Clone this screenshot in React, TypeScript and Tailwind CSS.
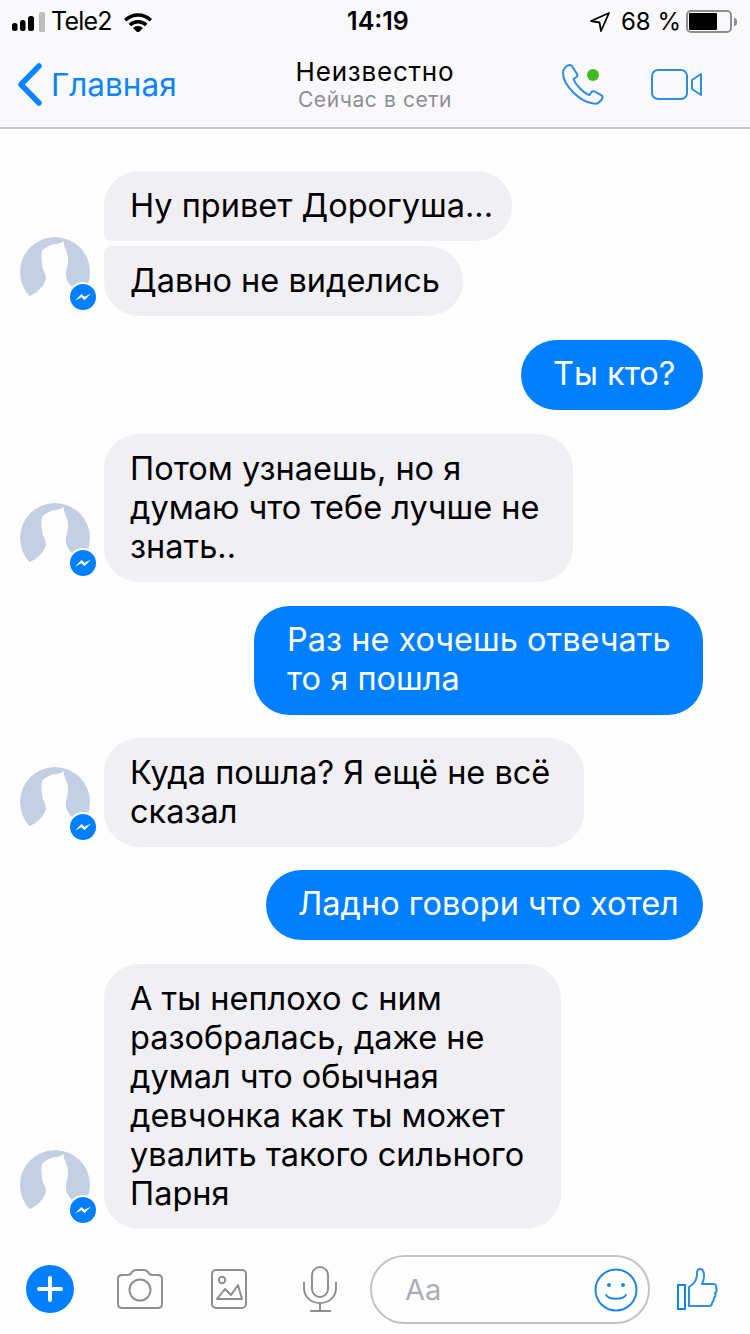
import React from 'react';

type Msg = {
  text: string[];
  mine?: boolean;
  cls: string;
};

const font = { fontFamily: 'Inter, "Noto Sans", sans-serif' };

const groups: Msg[][] = [
  [
    { text: ['Ну привет Дорогуша...'], cls: 'w-[408px] h-[70px] rounded-t-[35px] rounded-br-[35px] rounded-bl-[8px]' },
    { text: ['Давно не виделись'], cls: 'w-[359px] h-[70px] rounded-b-[35px] rounded-tr-[35px] rounded-tl-[8px]' }
  ],
  [{ text: ['Ты кто?'], mine: true, cls: 'w-[182px] h-[70px] pl-[32px]' }],
  [{ text: ['Потом узнаешь, но я', 'думаю что тебе лучше не', 'знать..'], cls: 'w-[469px] h-[148px]' }],
  [{ text: ['Раз не хочешь отвечать', 'то я пошла'], mine: true, cls: 'w-[449px] h-[109px] mb-[-1px] pl-[33px]' }],
  [{ text: ['Куда пошла? Я ещё не всё', 'сказал'], cls: 'w-[480px] h-[109px] mb-[-1px]' }],
  [{ text: ['Ладно говори что хотел'], mine: true, cls: 'w-[437px] h-[70px] pl-[32px]' }],
  [
    {
      text: ['А ты неплохо с ним', 'разобралась, даже не', 'думал что обычная', 'девчонка как ты может', 'увалить такого сильного', 'Парня'],
      cls: 'w-[457px] h-[265px]'
    }
  ]
];

const Avatar = () => (
  <div className="relative mb-[9px] h-[70px] w-[70px] shrink-0">
    <svg viewBox="0 0 70 70" className="h-[70px] w-[70px]">
      <circle cx="35" cy="35" r="35" fill="#c5cfe4" />
      <path
        fill="#fefefe"
        d="M23 13C27 9 33 7 36 7c3 0 6-2 8-3-1 3 1 6 2 9 2 5 3 11 1 17-1 4-2 8 0 13 2 4 4 6 7 9l16 27H-5l15-20c8-4 14-10 16-17 0-6-4-9-4-15-1-6-1-11 1-15z"
      />
    </svg>
    <div className="absolute bottom-[-5px] right-[-8px] flex h-[30px] w-[30px] items-center justify-center rounded-full bg-[#fefefe]">
      <div className="flex h-[26px] w-[26px] items-center justify-center rounded-full bg-[#0080ff]">
        <svg viewBox="0 0 26 26" className="h-[26px] w-[26px]">
          <path fill="#ffffff" d="M5 16.500l6.500-6.500 3 2.800 6.500-3.300-6.500 6.700-3-2.900z" />
        </svg>
      </div>
    </div>
  </div>
);

const Bubble = ({ msg }: { msg: Msg }) => (
  <div
    className={`text-[32.5px] leading-[39px] whitespace-nowrap ${
      msg.mine ? 'rounded-[35px] bg-[#0080ff] pt-[14px] text-white' : 'rounded-[35px] bg-[#f0eff4] pl-[26px] pt-[15px] text-black'
    } ${msg.cls}`}
  >
    {msg.text.map((line) => (
      <div key={line}>{line}</div>
    ))}
  </div>
);

const StatusBar = () => (
  <div className="flex h-[43px] items-center justify-between pl-[12px] pr-[13px] text-[25px] text-black">
    <div className="flex w-[263px] items-center">
      <svg viewBox="0 0 33 20" className="h-[20px] w-[33px]">
        <rect x="0" y="11" width="5.500" height="8" rx="2.500" fill="#000" />
        <rect x="8" y="8" width="5.500" height="11" rx="2.500" fill="#000" />
        <rect x="16" y="4" width="6" height="15" rx="2.500" fill="#000" />
        <rect x="27" y="0" width="6" height="20" rx="1.500" fill="#bdbdbd" />
      </svg>
      <span className="ml-[6px] tracking-[-0.8px]">Tele2</span>
      <svg viewBox="0 0 28 20" className="ml-[12px] h-[20px] w-[28px]">
        <path d="M0 7a20 20 0 0 1 28 0l-2.400 2.600a16.600 16.600 0 0 0-23.200 0z" fill="#000" />
        <path d="M4.600 11.700a13.600 13.600 0 0 1 18.800 0L21 14.200a10.200 10.200 0 0 0-14 0z" fill="#000" />
        <path d="M9 16a7.200 7.200 0 0 1 10 0l-5 5z" fill="#000" />
      </svg>
    </div>
    <span className="font-semibold">14:19</span>
    <div className="flex w-[256px] items-center justify-end">
      <svg viewBox="0 0 20 20" className="h-[20px] w-[20px]">
        <path d="M19 1L1 9l8.500 1.500L11 19z" fill="none" stroke="#000" strokeWidth="1.800" strokeLinejoin="round" />
      </svg>
      <span className="ml-[11px] text-[24px]">68 %</span>
      <div className="ml-[5px] flex items-center">
        <div className="h-[23px] w-[46px] rounded-[5px] border-2 border-[#8e8e8e] p-[1px]">
          <div className="h-full w-[28px] rounded-[1px] bg-black" />
        </div>
        <div className="ml-[2px] h-[8px] w-[3px] rounded-r-full bg-[#8e8e8e]" />
      </div>
    </div>
  </div>
);

const NavBar = () => (
  <div className="flex h-[86px] items-center border-b-2 border-[#c8c8cc] pb-[1px]">
    <div className="flex w-[200px] items-center pl-[17px]">
      <svg viewBox="0 0 25 43" className="h-[43px] w-[25px]">
        <path d="M22 3L4 21.500 22 40" fill="none" stroke="#0a84ff" strokeWidth="5.500" strokeLinecap="round" strokeLinejoin="round" />
      </svg>
      <span className="ml-[9px] text-[31.500px] text-[#0a84ff]">Главная</span>
    </div>
    <div className="flex-1 text-center">
      <div className="text-[26px] leading-[30px] tracking-[0.8px] text-black">Неизвестно</div>
      <div className="text-[21px] leading-[26px] tracking-[0.6px] text-[#8e8e93]">Сейчас в сети</div>
    </div>
    <div className="flex w-[200px] items-center justify-end pr-[48px]">
      <div className="relative h-[44px] w-[44px]">
        <svg viewBox="0 0 44 44" className="h-[44px] w-[44px]">
          <path
            d="M2 10c0-4 3-7 6-8 1 0 2 0 3 1l5 8c.6 1 .4 2-.5 3l-3 2c1 3 3 6 6 9s6 6 10 7l2-3c1-1 2-1 3-.6l7 4c1 .6 1.400 1.800.7 3-1.700 3-5 6-9 5C19 39 2 22 2 10z"
            fill="none"
            stroke="#2f8de4"
            strokeWidth="2"
            strokeLinejoin="round"
          />
        </svg>
        <div className="absolute right-[6px] top-[6px] h-[12px] w-[12px] rounded-full bg-[#44b91f]" />
      </div>
      <svg viewBox="0 0 51 31" className="ml-[46px] h-[31px] w-[51px]">
        <rect x="1" y="1" width="35" height="29" rx="6" fill="none" stroke="#2f8de4" strokeWidth="2" />
        <path d="M41 11l9-6v21l-9-6z" fill="none" stroke="#2f8de4" strokeWidth="2" strokeLinejoin="round" />
      </svg>
    </div>
  </div>
);

const Composer = () => (
  <div className="flex h-[105px] items-start pl-[26px] pt-[26px]">
    <div className="mt-[10px] flex h-[48px] w-[48px] shrink-0 items-center justify-center rounded-full bg-[#0080ff]">
      <svg viewBox="0 0 26 26" className="h-[26px] w-[26px]">
        <path d="M13 2v22M2 13h22" stroke="#fff" strokeWidth="4" strokeLinecap="round" />
      </svg>
    </div>
    <svg viewBox="0 0 46 40" className="ml-[43px] mt-[14px] h-[40px] w-[46px] shrink-0">
      <path
        d="M1 10c0-3 2-4 4-4h6c2 0 3-1 4-3 1-1 2-2 4-2h8c2 0 3 1 4 2 1 2 2 3 4 3h6c2 0 4 1 4 4v25c0 3-2 4-4 4H5c-2 0-4-1-4-4z"
        fill="none"
        stroke="#8e8e93"
        strokeWidth="2"
      />
      <circle cx="23" cy="21" r="10.500" fill="none" stroke="#8e8e93" strokeWidth="2" />
    </svg>
    <svg viewBox="0 0 36 40" className="ml-[48px] mt-[14px] h-[40px] w-[36px] shrink-0">
      <rect x="1" y="1" width="34" height="38" rx="4" fill="none" stroke="#8e8e93" strokeWidth="2" />
      <circle cx="11" cy="11" r="3.200" fill="none" stroke="#8e8e93" strokeWidth="2" />
      <path d="M6 30l8-10 6 6 7-10 4 14z" fill="none" stroke="#8e8e93" strokeWidth="2" strokeLinejoin="round" />
    </svg>
    <svg viewBox="0 0 34 46" className="ml-[56px] mt-[11px] h-[46px] w-[34px] shrink-0">
      <rect x="9" y="1" width="16" height="30" rx="8" fill="none" stroke="#8e8e93" strokeWidth="2" />
      <path d="M1 16v6c0 9 7 15 16 15s16-6 16-15v-6M17 37v8M7 45h21" fill="none" stroke="#8e8e93" strokeWidth="2" />
    </svg>
    <div className="ml-[33px] flex h-[69px] w-[280px] shrink-0 items-center justify-between rounded-full border-2 border-[#c4c4c6] pl-[33px] pr-[10px]">
      <span className="text-[29px] text-[#aeaeb2]">Aa</span>
      <svg viewBox="0 0 44 44" className="h-[44px] w-[44px]">
        <circle cx="22" cy="22" r="20.500" fill="none" stroke="#1e88e5" strokeWidth="2" />
        <circle cx="15" cy="17" r="2" fill="#1e88e5" />
        <circle cx="29" cy="17" r="2" fill="#1e88e5" />
        <path d="M12 27c3 5 17 5 20 0" fill="none" stroke="#1e88e5" strokeWidth="2" strokeLinecap="round" />
      </svg>
    </div>
    <svg viewBox="0 0 42 44" className="ml-[27px] mt-[12px] h-[44px] w-[42px] shrink-0">
      <rect x="1" y="18" width="7" height="24" fill="none" stroke="#0a84ff" strokeWidth="2" />
      <path
        d="M12 39V20c5-3 8-8 8-13 0-3 1-5 3-5 3 0 4 4 4 7 0 3-1 6-2 8h11c3 0 4 2 3 4 1 2 1 4-1 5 1 2 0 4-1 5 0 2-1 4-2 5 0 2-1 3-3 3z"
        fill="none"
        stroke="#2f8de4"
        strokeWidth="2"
        strokeLinejoin="round"
      />
    </svg>
  </div>
);

const App = () => (
  <div className="flex h-[1334px] w-[750px] flex-col overflow-hidden bg-[#fefefe]" style={font}>
    <div className="bg-[#f9f9fc]">
      <StatusBar />
      <NavBar />
    </div>
    <main className="flex flex-1 flex-col gap-[24px] pl-[20px] pr-[47px] pt-[42px]">
      {groups.map((group, i) =>
        group[0].mine ? (
          <div key={i} className="flex justify-end">
            <Bubble msg={group[0]} />
          </div>
        ) : (
          <div key={i} className="flex items-end gap-[14px]">
            <Avatar />
            <div className="flex flex-col gap-[5px]">
              {group.map((msg) => (
                <Bubble key={msg.text[0]} msg={msg} />
              ))}
            </div>
          </div>
        )
      )}
    </main>
    <Composer />
  </div>
);

export default App;
